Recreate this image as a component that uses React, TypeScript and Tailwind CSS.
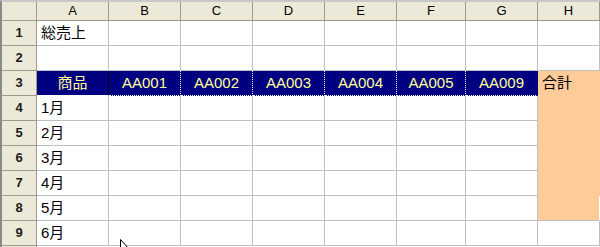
const cols = ['A', 'B', 'C', 'D', 'E', 'F', 'G', 'H']
const codes = ['AA001', 'AA002', 'AA003', 'AA004', 'AA005', 'AA009']
const months = ['1月', '2月', '3月', '4月', '5月', '6月']

const font = { fontFamily: '"Liberation Sans", "Noto Sans CJK JP", sans-serif' }

function RowHead({ n }: { n?: number }) {
  return (
    <div className="flex h-[25px] items-center justify-center border-r border-b border-[#9d9a8c] bg-[#ece9d8] text-[13px] font-bold text-[#1a1a1a]">
      {n}
    </div>
  )
}

function Cell({ children, className = '' }: { children?: React.ReactNode; className?: string }) {
  return (
    <div className={`flex h-[25px] items-center border-r border-b border-[#c0c0c0] bg-white pl-[4px] text-[15px] text-black ${className}`}>
      {children}
    </div>
  )
}

export default function App() {
  return (
    <div className="relative h-[247px] w-[600px] overflow-hidden bg-white" style={font}>
      <div className="border-t-2 border-l-2 border-t-[#c8c8c8] border-l-[#8a8a8a]">
        <div className="grid grid-cols-[35px_72px_72px_72px_72px_72px_69px_72px_62px]">
          {/* column headers */}
          <div className="h-[19px] border-r border-b border-[#9d9a8c] bg-[#ece9d8]" />
          {cols.map((c) => (
            <div
              key={c}
              className="flex h-[19px] items-center justify-center border-r border-b border-[#9d9a8c] bg-[#ece9d8] text-[13px] text-black"
            >
              {c}
            </div>
          ))}

          {/* row 1 */}
          <RowHead n={1} />
          <Cell>総売上</Cell>
          {Array.from({ length: 7 }).map((_, i) => (
            <Cell key={i} />
          ))}

          {/* row 2 */}
          <RowHead n={2} />
          {Array.from({ length: 8 }).map((_, i) => (
            <Cell key={i} />
          ))}

          {/* row 3: header band */}
          <RowHead n={3} />
          <div className="flex h-[25px] items-center justify-center border-r border-b border-r-black border-b-white border-b-dotted bg-[#000080] text-[15px] text-[#ffff99]">
            商品
          </div>
          {codes.map((c, i) => (
            <div
              key={c}
              className={`flex h-[25px] items-center justify-center border-r border-b border-dotted border-white bg-[#000080] text-[15px] text-[#ffff99] ${
                i === codes.length - 1 ? 'border-r-[#000080]' : ''
              }`}
            >
              {c}
            </div>
          ))}
          <div className="flex h-[25px] items-center bg-[#ffcc99] pl-[4px] text-[15px] text-black">合計</div>

          {/* rows 4-9 */}
          {months.map((m, r) => (
            <div key={m} className="contents">
              <RowHead n={r + 4} />
              <Cell>{m}</Cell>
              {Array.from({ length: 6 }).map((_, i) => (
                <Cell key={i} />
              ))}
              {r < 4 ? (
                <div className="h-[25px] bg-[#ffcc99]" />
              ) : r === 4 ? (
                <div className="h-[25px] border-r border-b border-r-white border-b-[#c0c0c0] bg-[#ffcc99]" />
              ) : (
                <Cell />
              )}
            </div>
          ))}

          {/* next row's top edge */}
          <RowHead />
        </div>
      </div>

      {/* mouse pointer */}
      <svg className="absolute left-[120px] top-[239px]" width="12" height="18" viewBox="0 0 12 18">
        <path d="M0.5 0.5 L0.5 14 L3.5 11 L6 16.5 L8 15.5 L5.5 10.5 L9.5 10.5 Z" fill="white" stroke="black" strokeWidth="1" />
      </svg>
    </div>
  )
}
